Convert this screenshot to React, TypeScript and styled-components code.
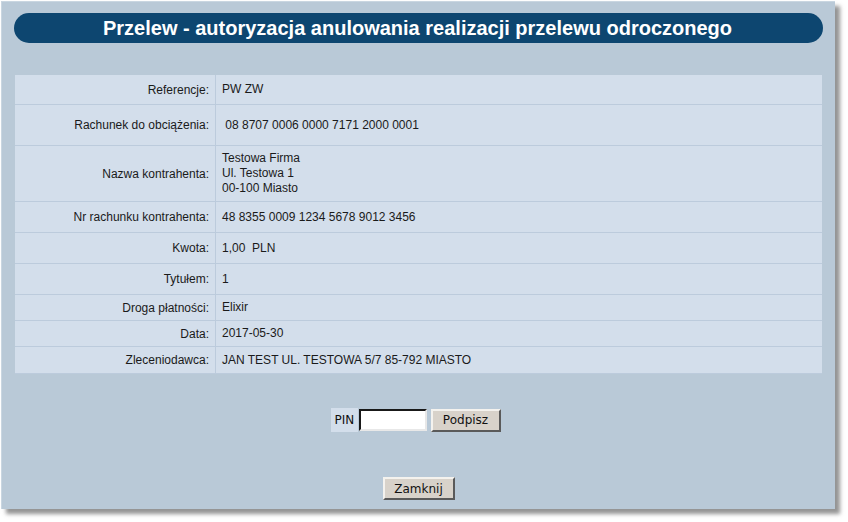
import React from "react";
import styled, { createGlobalStyle } from "styled-components";

const Global = createGlobalStyle`
  html, body { margin: 0; padding: 0; background: #ffffff; }
  body { font-family: "Liberation Sans", Arial, sans-serif; }
`;

const Page = styled.div`
  width: 848px;
  height: 522px;
  padding: 1px 0 0 1px;
  box-sizing: border-box;
`;

const Panel = styled.div`
  width: 834px;
  height: 508px;
  box-sizing: border-box;
  background: #b9c9d7;
  border-top: 1px solid #c9d6e1;
  border-left: 1px solid #c9d6e1;
  box-shadow: 5px 5px 4px rgba(60, 60, 60, 0.55);
  padding: 11px 12px 0 12px;
  display: flex;
  flex-direction: column;
`;

const Header = styled.div`
  height: 30px;
  border-radius: 15px;
  background: #0d4670;
  color: #ffffff;
  font-family: "Liberation Sans", Arial, sans-serif;
  font-weight: bold;
  font-size: 20px;
  display: flex;
  align-items: center;
  justify-content: center;
  padding-right: 2px;
`;

const Table = styled.div`
  margin: 32px 1px 0 1px;
  background: #d3deeb;
  display: grid;
  grid-template-columns: 201px 1fr;
  font-size: 12px;
  color: #1a1a1a;
`;

const Label = styled.div<{ $h: number }>`
  height: ${(p) => p.$h}px;
  box-sizing: border-box;
  display: flex;
  align-items: center;
  justify-content: flex-end;
  padding-right: 6px;
  border-right: 1px solid #bccbdc;
  border-bottom: 1px solid #bccbdc;
  white-space: nowrap;
`;

const Value = styled.div<{ $h: number }>`
  height: ${(p) => p.$h}px;
  box-sizing: border-box;
  display: flex;
  flex-direction: column;
  justify-content: center;
  padding-left: 6px;
  border-bottom: 1px solid #bccbdc;
  line-height: 15px;
  white-space: pre;
`;

const PinRow = styled.div`
  margin-top: 34px;
  display: flex;
  justify-content: center;
  align-items: center;
  padding-right: 6px;
`;

const PinLabel = styled.div`
  background: #d3deeb;
  height: 24px;
  width: 27px;
  box-sizing: border-box;
  padding-left: 4px;
  display: flex;
  align-items: center;
  font-family: "DejaVu Sans", Tahoma, sans-serif;
  font-size: 12px;
  color: #111;
`;

const PinInput = styled.input`
  width: 68px;
  height: 22px;
  box-sizing: border-box;
  border: 2px inset #888;
  border-color: #6e6e6e #e8e8e8 #e8e8e8 #6e6e6e;
  background: #ffffff;
  margin: 0 4px 0 1px;
  padding: 0 2px;
  outline: none;
`;

const Button = styled.button<{ $w: number }>`
  width: ${(p) => p.$w}px;
  height: 23px;
  box-sizing: border-box;
  background: #d8d2ca;
  border: 2px solid;
  border-color: #f4f2ee #5a5a5a #5a5a5a #f4f2ee;
  font-family: "DejaVu Sans", Tahoma, sans-serif;
  font-size: 12px;
  color: #111;
  padding: 0;
  cursor: pointer;
`;

const CloseRow = styled.div`
  margin-top: 45px;
  display: flex;
  justify-content: center;
`;

const rows: { label: string; value: string; h: number }[] = [
  { label: "Referencje:", value: "PW ZW", h: 30 },
  { label: "Rachunek do obciążenia:", value: " 08 8707 0006 0000 7171 2000 0001", h: 41 },
  { label: "Nazwa kontrahenta:", value: "Testowa Firma\nUl. Testowa 1\n00-100 Miasto", h: 56 },
  { label: "Nr rachunku kontrahenta:", value: "48 8355 0009 1234 5678 9012 3456", h: 31 },
  { label: "Kwota:", value: "1,00  PLN", h: 31 },
  { label: "Tytułem:", value: "1", h: 31 },
  { label: "Droga płatności:", value: "Elixir", h: 26 },
  { label: "Data:", value: "2017-05-30", h: 26 },
  { label: "Zleceniodawca:", value: "JAN TEST UL. TESTOWA 5/7 85-792 MIASTO", h: 27 },
];

export default function App() {
  return (
    <Page>
      <Global />
      <Panel>
        <Header>Przelew - autoryzacja anulowania realizacji przelewu odroczonego</Header>
        <Table>
          {rows.map((r) => (
            <React.Fragment key={r.label}>
              <Label $h={r.h}>{r.label}</Label>
              <Value $h={r.h}>{r.value}</Value>
            </React.Fragment>
          ))}
        </Table>
        <PinRow>
          <PinLabel>PIN</PinLabel>
          <PinInput type="password" />
          <Button $w={70}>Podpisz</Button>
        </PinRow>
        <CloseRow>
          <Button $w={72}>Zamknij</Button>
        </CloseRow>
      </Panel>
    </Page>
  );
}
